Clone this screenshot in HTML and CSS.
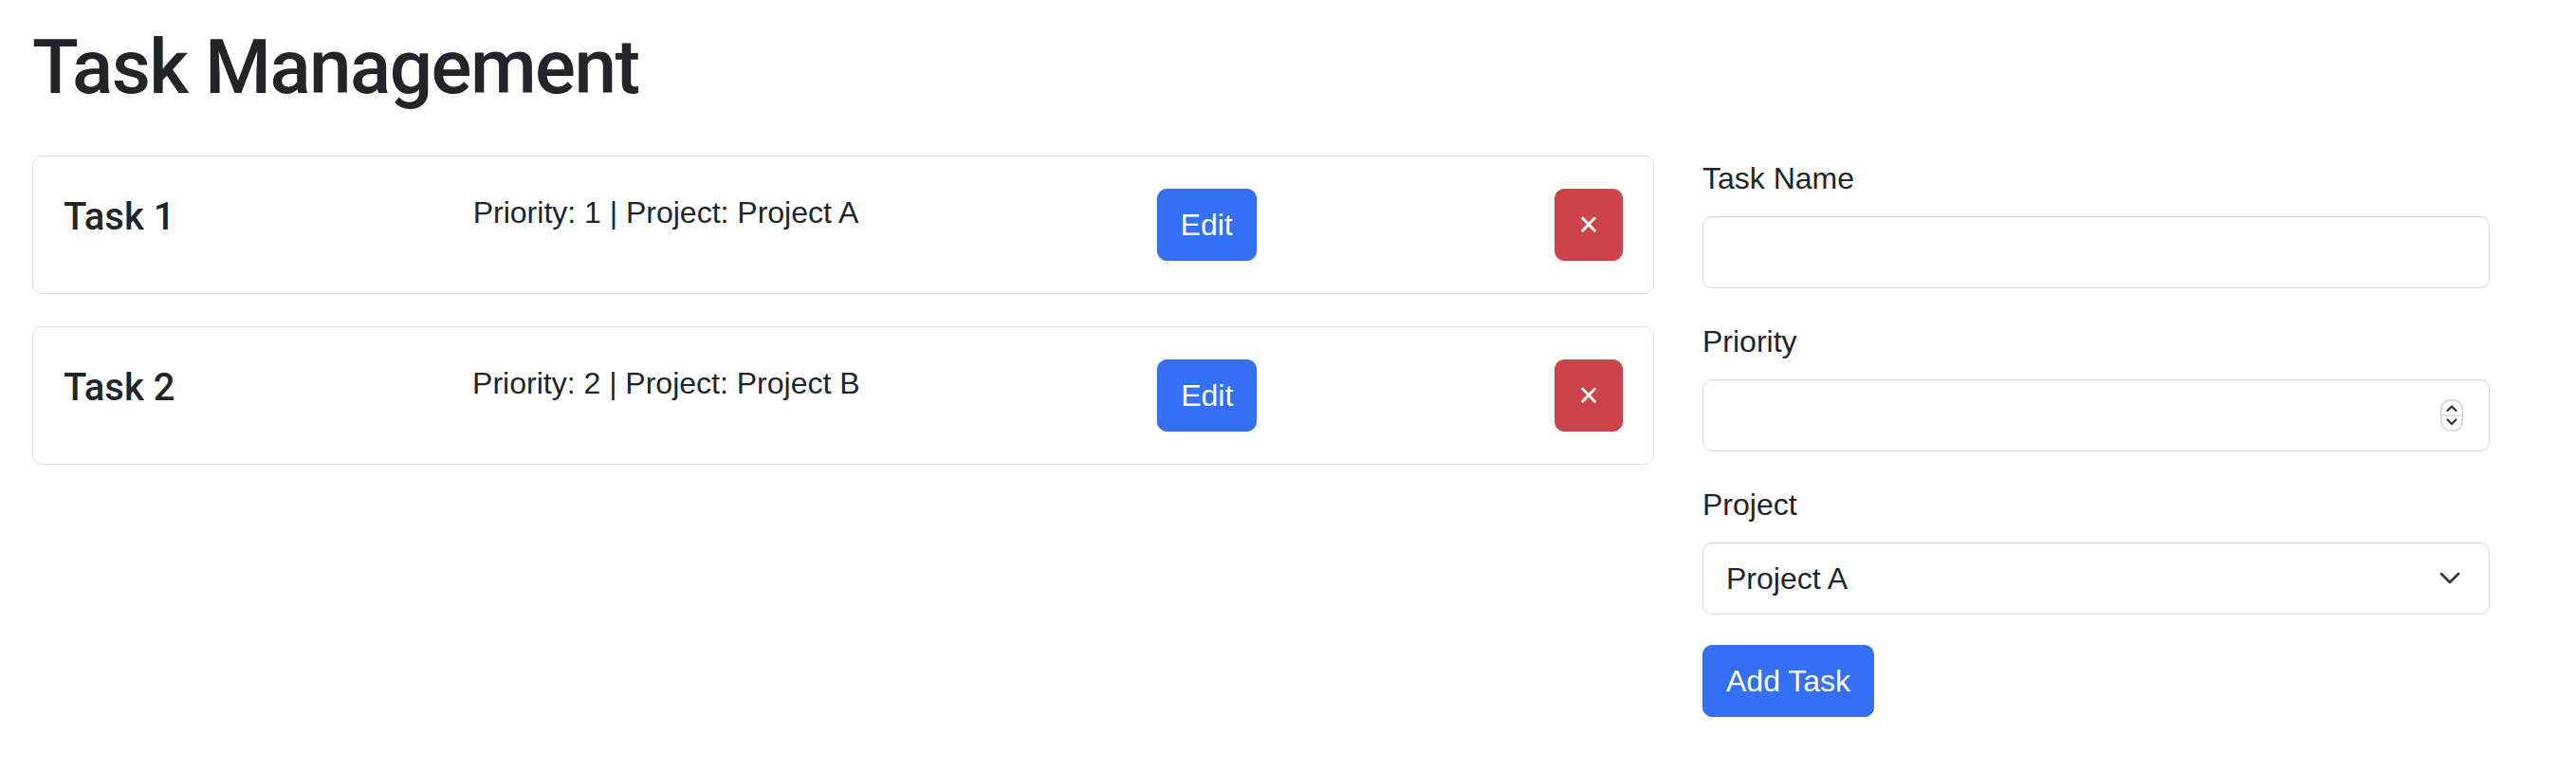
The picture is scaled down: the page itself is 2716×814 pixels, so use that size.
FILE: index.html
```html
<!DOCTYPE html>
<html lang="en">
<head>
<meta charset="utf-8">
<title>Task Management</title>
<link rel="stylesheet" href="styles.css">
</head>
<body>
<div class="page">
  <h1 class="title">Task Management</h1>
  <div class="layout">
    <div class="task-list">
      <div class="card">
        <div class="card-body">
          <h5 class="task-name">Task 1</h5>
          <p class="task-meta">Priority: 1 | Project: Project A</p>
          <button class="btn btn-primary" type="button">Edit</button>
          <button class="btn btn-danger btn-delete" type="button">×</button>
        </div>
      </div>
      <div class="card">
        <div class="card-body">
          <h5 class="task-name">Task 2</h5>
          <p class="task-meta">Priority: 2 | Project: Project B</p>
          <button class="btn btn-primary" type="button">Edit</button>
          <button class="btn btn-danger btn-delete" type="button">×</button>
        </div>
      </div>
    </div>
    <form class="task-form">
      <div class="field">
        <label class="form-label" for="taskName">Task Name</label>
        <input class="form-control" id="taskName" type="text">
      </div>
      <div class="field">
        <label class="form-label" for="priority">Priority</label>
        <div class="input-wrap">
          <input class="form-control no-spin" id="priority" type="number">
          <svg class="spinner" width="24" height="34" viewBox="0 0 24 34" aria-hidden="true">
            <rect x="0.75" y="0.75" width="22.5" height="32.5" rx="10" fill="#ffffff" stroke="#d4d4d4" stroke-width="1.5"/>
            <line x1="1" y1="17" x2="23" y2="17" stroke="#dadada" stroke-width="1.5"/>
            <path d="M7.5 12 L12 7.5 L16.5 12" fill="none" stroke="#333333" stroke-width="2.2" stroke-linecap="round" stroke-linejoin="round"/>
            <path d="M7.5 21.5 L12 26 L16.5 21.5" fill="none" stroke="#333333" stroke-width="2.2" stroke-linecap="round" stroke-linejoin="round"/>
          </svg>
        </div>
      </div>
      <div class="field">
        <label class="form-label" for="project">Project</label>
        <div class="input-wrap">
          <select class="form-select" id="project">
            <option>Project A</option>
            <option>Project B</option>
          </select>
          <svg class="chevron" width="24" height="16" viewBox="0 0 24 16" aria-hidden="true">
            <path d="M3 3 L12 12 L21 3" fill="none" stroke="#343a40" stroke-width="2.8" stroke-linecap="round" stroke-linejoin="round"/>
          </svg>
        </div>
      </div>
      <button class="btn btn-primary" type="button">Add Task</button>
    </form>
  </div>
</div>
</body>
</html>
```
FILE: styles.css
```css
* {
  box-sizing: border-box;
}

body {
  margin: 0;
  background: #ffffff;
  color: #212529;
  font-family: "Liberation Sans", Arial, sans-serif;
  font-size: 32px;
  line-height: 1.5;
}

.page {
  padding: 23px 0 0 34px;
}

.title {
  margin: 0 0 45px;
  font-family: Roboto, "Liberation Sans", Arial, sans-serif;
  font-size: 80px;
  font-weight: 500;
  line-height: 1.2;
  letter-spacing: -1.5px;
}

.layout {
  display: grid;
  grid-template-columns: 1710px 830px;
  column-gap: 51px;
  align-items: start;
}

.card {
  border: 1px solid #dfdfdf;
  border-radius: 10px;
  background: #ffffff;
  margin-bottom: 34px;
}

.card-body {
  display: flex;
  align-items: center;
  justify-content: space-between;
  padding: 32px;
}

.task-name {
  margin: 0 0 16px;
  font-family: Roboto, "Liberation Sans", Arial, sans-serif;
  font-size: 40px;
  font-weight: 500;
  line-height: 1.2;
}

.task-meta {
  margin: 3px 0 29px;
  line-height: 48px;
}

.btn {
  display: inline-block;
  height: 76px;
  padding: 0 24px;
  border: 1px solid transparent;
  border-radius: 10px;
  font-family: inherit;
  font-size: 32px;
  line-height: 1.5;
  color: #ffffff;
  cursor: pointer;
}

.btn-primary {
  background: #3370f4;
  border-color: #3370f4;
}

.btn-danger {
  background: #cb444b;
  border-color: #cb444b;
}

.btn-delete {
  width: 72px;
  padding: 0;
  font-size: 36px;
  font-weight: 400;
}

.field {
  margin-bottom: 32px;
}

.form-label {
  display: block;
  margin-bottom: 16px;
  line-height: 48px;
}

.input-wrap {
  position: relative;
}

.form-control,
.form-select {
  display: block;
  width: 100%;
  height: 76px;
  padding: 0 24px;
  border: 1px solid #ced4da;
  border-radius: 10px;
  background: #ffffff;
  color: #212529;
  font-family: inherit;
  font-size: 32px;
  line-height: 1.5;
}

.form-select {
  appearance: none;
  -webkit-appearance: none;
}

.no-spin {
  -moz-appearance: textfield;
}

.no-spin::-webkit-inner-spin-button,
.no-spin::-webkit-outer-spin-button {
  -webkit-appearance: none;
  margin: 0;
}

.spinner {
  position: absolute;
  right: 28px;
  top: 21px;
  pointer-events: none;
}

.chevron {
  position: absolute;
  right: 30px;
  top: 30px;
  pointer-events: none;
}
```
